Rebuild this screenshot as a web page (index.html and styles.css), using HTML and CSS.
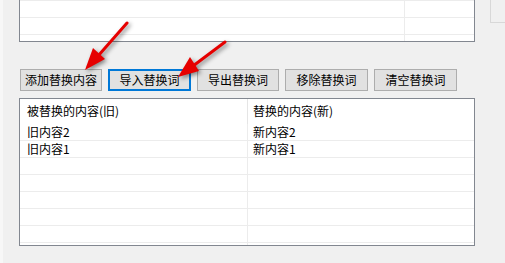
FILE: index.html
```
<!DOCTYPE html>
<html lang="zh-CN">
<head>
    <meta charset="UTF-8">
    <title>替换词</title>
    <link rel="stylesheet" href="styles.css">
</head>
<body>
    <div class="window">
        <div class="top-row">
            <div class="top-list">
                <div class="list-row first"><div class="cell-a"></div><div class="cell-b"></div></div>
                <div class="list-row"><div class="cell-a"></div><div class="cell-b"></div></div>
                <div class="list-row"><div class="cell-a"></div><div class="cell-b"></div></div>
                <div class="list-row"><div class="cell-a"></div><div class="cell-b"></div></div>
            </div>
            <div class="side-panel"></div>
        </div>

        <div class="toolbar">
            <button type="button">添加替换内容</button>
            <button type="button" class="focused">导入替换词</button>
            <button type="button">导出替换词</button>
            <button type="button">移除替换词</button>
            <button type="button">清空替换词</button>
        </div>

        <div class="word-list">
            <div class="head-row">
                <div class="col-old">被替换的内容(旧)</div>
                <div class="col-new">替换的内容(新)</div>
            </div>
            <div class="data-row"><div class="col-old">旧内容2</div><div class="col-new">新内容2</div></div>
            <div class="data-row"><div class="col-old">旧内容1</div><div class="col-new">新内容1</div></div>
            <div class="data-row"><div class="col-old"></div><div class="col-new"></div></div>
            <div class="data-row"><div class="col-old"></div><div class="col-new"></div></div>
            <div class="data-row"><div class="col-old"></div><div class="col-new"></div></div>
            <div class="data-row"><div class="col-old"></div><div class="col-new"></div></div>
            <div class="data-row"><div class="col-old"></div><div class="col-new"></div></div>
            <div class="data-row"><div class="col-old"></div><div class="col-new"></div></div>
        </div>
    </div>

    <!-- red callout arrows drawn over the screenshot -->
    <svg class="arrows" width="505" height="263" viewBox="0 0 505 263">
        <g class="arrow">
            <line x1="127" y1="23" x2="98" y2="56" />
            <polygon points="85,70 105,59 93,48" />
        </g>
        <g class="arrow">
            <line x1="225" y1="42" x2="193" y2="66" />
            <polygon points="178,77 199,71 190,57" />
        </g>
    </svg>
</body>
</html>
```

FILE: styles.css
```
body {
    margin: 0;
    padding: 0;
    width: 505px;
    height: 263px;
    overflow: hidden;
    background-color: #f0f0f0;
    font-family: "Noto Sans CJK SC", "Microsoft YaHei", sans-serif;
    font-size: 12px;
    color: #000;
    position: relative;
}

.window {
    height: 263px;
    padding-left: 16px;
    border-left: 3px solid #f7f7f7;
}

/* top list, cut off by the window */
.top-row {
    display: flex;
    align-items: flex-start;
}

.top-list {
    flex-shrink: 0;
    width: 454px;
    height: 41px;
    background-color: #fff;
    border: 1px solid #828790;
    border-top: none;
    overflow: hidden;
}

.list-row {
    display: flex;
    height: 16px;
    border-bottom: 1px solid #ececec;
}

.list-row.first {
    margin-top: -16px;
}

.cell-a {
    width: 384px;
    border-right: 1px solid #ececec;
}

.side-panel {
    flex-shrink: 0;
    margin-left: 15px;
    width: 20px;
    height: 22px;
    border-left: 1px solid #d8d8d8;
    border-bottom: 1px solid #d8d8d8;
}

/* buttons */
.toolbar {
    display: flex;
    gap: 6px;
    margin-top: 27px;
    margin-left: 1px;
}

button {
    flex-shrink: 0;
    width: 83px;
    height: 22px;
    padding: 0;
    background-color: #e1e1e1;
    border: 1px solid #adadad;
    border-radius: 0;
    font-family: inherit;
    font-size: 12px;
    color: #000;
    line-height: 18px;
}

button:first-child,
button:nth-child(3) {
    width: 82px;
}

button.focused {
    border: 2px solid #0078d7;
}

/* replacement words list */
.word-list {
    margin-top: 7px;
    width: 454px;
    height: 146px;
    background-color: #fff;
    border: 1px solid #828790;
    overflow: hidden;
}

.head-row {
    display: flex;
    height: 25px;
    line-height: 24px;
}

.head-row .col-old {
    border-right: 1px solid #e5e5e5;
}

.data-row {
    display: flex;
    height: 16px;
    line-height: 16px;
    border-bottom: 1px solid #ececec;
}

.col-old {
    width: 220px;
    padding-left: 7px;
    border-right: 1px solid #ececec;
    white-space: nowrap;
}

.col-new {
    flex: 1;
    padding-left: 5px;
    white-space: nowrap;
}

/* arrows overlay */
.arrows {
    position: absolute;
    left: 0;
    top: 0;
    pointer-events: none;
}

.arrow {
    filter: drop-shadow(2px 2px 2px rgba(0, 0, 0, 0.45));
}

.arrow line {
    stroke: #e60000;
    stroke-width: 3;
    stroke-linecap: round;
}

.arrow polygon {
    fill: #e60000;
}
```
